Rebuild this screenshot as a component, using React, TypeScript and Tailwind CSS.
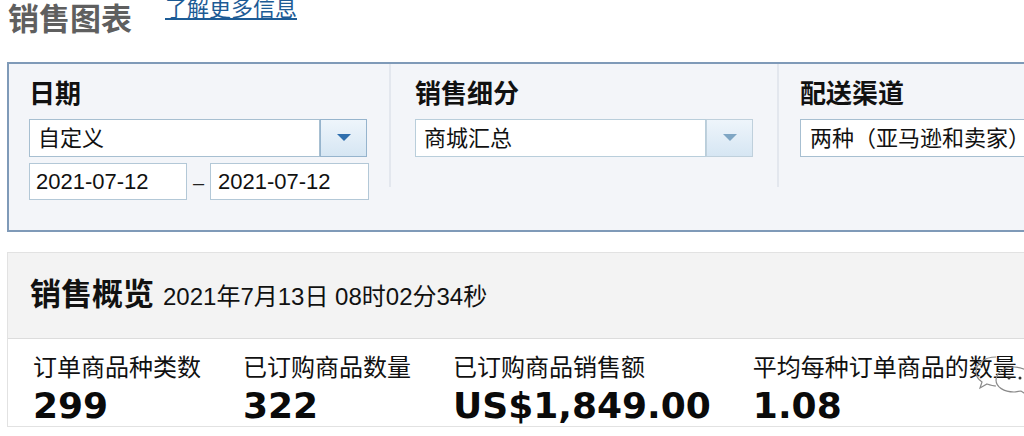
const cjk = "font-['Liberation_Sans','Noto_Sans_CJK_SC',sans-serif]";

function Arrow({ color }: { color: string }) {
  return (
    <svg width="14" height="8" viewBox="0 0 14 8">
      <path d="M0 0 L14 0 L7 7 Z" fill={color} />
    </svg>
  );
}

function Select({ value, dim }: { value: string; dim?: boolean }) {
  return (
    <div className="flex h-[38px] w-[338px]">
      <div
        className={`flex flex-1 items-center bg-white pl-[8px] text-[22px] text-[#111] border ${
          dim ? 'border-[#b9cedb]' : 'border-[#a7bfd1]'
        }`}
      >
        {value}
      </div>
      <div
        className={`flex w-[47px] items-center justify-center bg-gradient-to-b from-[#eef5fb] to-[#d6e6f3] border ${
          dim ? 'border-[#bfd0dc]' : 'border-[#96b4cd]'
        }`}
      >
        <Arrow color={dim ? '#7fa6c4' : '#2f6fae'} />
      </div>
    </div>
  );
}

export default function App() {
  return (
    <div className={`h-[436px] w-[1024px] overflow-hidden bg-white ${cjk}`}>
      {/* title row */}
      <div className="flex h-[62px] items-start pl-[8px]">
        <h1 className="text-[31px] font-bold leading-[40px] text-[#5f5f5f]">销售图表</h1>
        <a className="ml-[33px] mt-[-3px] text-[22px] leading-[24px] text-[#1d5b95] underline underline-offset-[2px]">
          了解更多信息
        </a>
      </div>

      {/* filters */}
      <div className="ml-[7px] flex h-[170px] w-[1040px] border-2 border-[#7f9ab8] bg-[#f3f5f9]">
        <div className="w-[380px] shrink-0 pl-[20px] pt-[14px]">
          <div className="mb-[9px] h-[32px] text-[26px] font-bold leading-[32px] text-[#111]">日期</div>
          <Select value="自定义" />
          <div className="mt-[6px] flex h-[37px] items-center">
            <div className="flex h-full w-[158px] items-center border border-[#b3c8d7] bg-white pl-[6px] text-[22px] text-[#111]">
              2021-07-12
            </div>
            <div className="flex w-[23px] justify-center pt-[2px] text-[20px] text-[#222]">–</div>
            <div className="flex h-full w-[159px] items-center border border-[#b3c8d7] bg-white pl-[7px] text-[22px] text-[#111]">
              2021-07-12
            </div>
          </div>
        </div>
        <div className="h-[123px] w-[2px] shrink-0 bg-[#e3e7ee]" />
        <div className="w-[386px] shrink-0 pl-[24px] pt-[14px]">
          <div className="mb-[9px] h-[32px] text-[26px] font-bold leading-[32px] text-[#111]">销售细分</div>
          <Select value="商城汇总" dim />
        </div>
        <div className="h-[123px] w-[2px] shrink-0 bg-[#e3e7ee]" />
        <div className="flex-1 pl-[21px] pt-[14px]">
          <div className="mb-[9px] h-[32px] text-[26px] font-bold leading-[32px] text-[#111]">配送渠道</div>
          <div className="flex h-[38px] w-[300px] items-center border border-[#a7bfd1] bg-white pl-[9px] text-[22px] text-[#111]">
            两种（亚马逊和卖家）
          </div>
        </div>
      </div>

      {/* overview */}
      <div className="ml-[7px] mt-[20px] w-[1040px] border border-[#e2e2e2]">
        <div className="flex h-[86px] items-center gap-[9px] border-b border-[#dcdcdc] bg-[#f3f3f3] pl-[22px]">
          <span className="text-[31px] font-bold text-[#111]">销售概览</span>
          <span className="pt-[3px] text-[24px] text-[#111]">2021年7月13日 08时02分34秒</span>
        </div>
        <div className="relative flex gap-[42px] bg-white pl-[25px] pt-[14px]">
          {[
            ['订单商品种类数', '299'],
            ['已订购商品数量', '322'],
            ['已订购商品销售额', 'US$1,849.00'],
            ['平均每种订单商品的数量', '1.08'],
          ].map(([label, value]) => (
            <div key={label} className="shrink-0">
              <div className="text-[24px] leading-[30px] text-[#111] whitespace-nowrap">{label}</div>
              <div className="mt-[3px] font-['DejaVu_Sans',sans-serif] text-[36px] font-bold leading-[40px] text-[#0a0a0a]">
                {value}
              </div>
            </div>
          ))}
          {/* watermark */}
          <svg
            className="absolute left-[966px] top-[14px]"
            width="60"
            height="44"
            viewBox="0 0 60 44"
            fill="none"
            stroke="#8a8a8a"
            strokeWidth="1.2"
          >
            <path d="M22 4 C10 4 2 11 2 19 C2 24 5 27 8 29 L6 35 L13 31 C16 32 19 33 22 33" />
            <path d="M40 14 C30 14 22 20 22 27 C22 34 30 39 40 39 C43 39 45 38 47 38 L53 42 L51 36 C55 34 58 31 58 27 C58 20 50 14 40 14 Z" />
            <circle cx="35" cy="25" r="1.5" fill="#333" stroke="none" />
            <circle cx="46" cy="25" r="1.5" fill="#333" stroke="none" />
          </svg>
        </div>
      </div>
    </div>
  );
}
